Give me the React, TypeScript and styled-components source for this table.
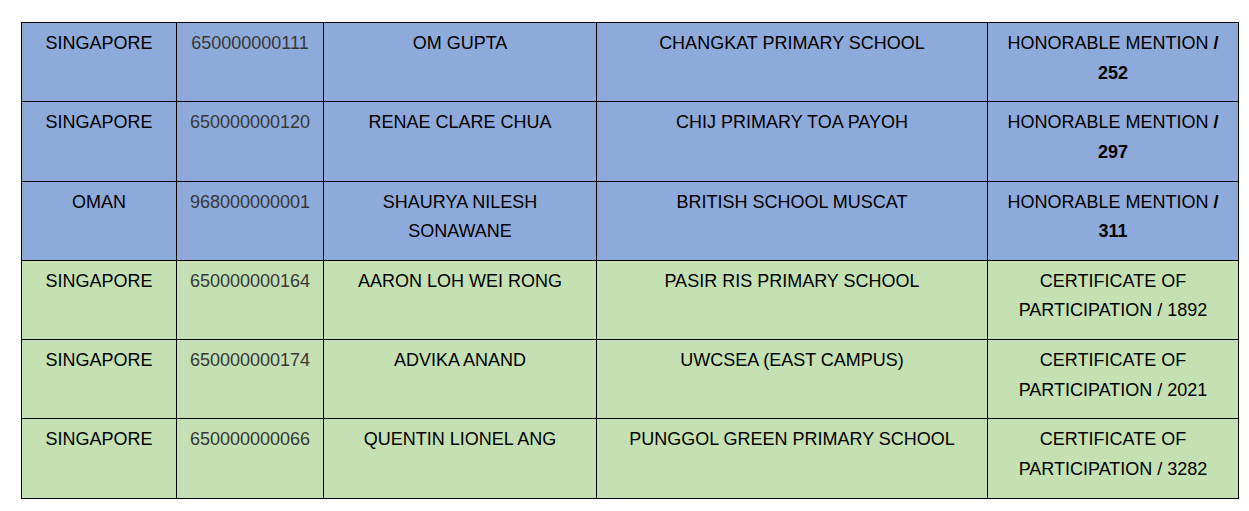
import React from "react"
import styled, { createGlobalStyle } from "styled-components"

const Global = createGlobalStyle`
  body {
    margin: 0;
    background: #ffffff;
    font-family: "Liberation Sans", Arial, sans-serif;
  }
`

const Page = styled.div`
  padding: 22px 0 0 21px;
`

const Table = styled.table`
  border-collapse: collapse;
  table-layout: fixed;
  width: 1217px;
`

const Col = styled.col<{ $w: number }>`
  width: ${(p) => p.$w}px;
`

const Row = styled.tr<{ $tone: "blue" | "green" }>`
  height: 79.3px;
  background: ${(p) => (p.$tone === "blue" ? "#8eaadb" : "#c5e0b3")};
`

const Cell = styled.td<{ $muted?: boolean }>`
  border: 1px solid #000;
  vertical-align: top;
  text-align: center;
  padding: 6px 8px 0;
  font-size: 18px;
  line-height: 29.6px;
  color: ${(p) => (p.$muted ? "#383838" : "#000")};
`

const Strong = styled.b`
  font-weight: 700;
`

type Entry = {
  country: string
  id: string
  name: string
  school: string
  award: string
  rank: string
  tone: "blue" | "green"
}

const widths = [155, 147, 273, 391, 251]

const rows: Entry[] = [
  { country: "SINGAPORE", id: "650000000111", name: "OM GUPTA", school: "CHANGKAT PRIMARY SCHOOL", award: "HONORABLE MENTION", rank: "252", tone: "blue" },
  { country: "SINGAPORE", id: "650000000120", name: "RENAE CLARE CHUA", school: "CHIJ PRIMARY TOA PAYOH", award: "HONORABLE MENTION", rank: "297", tone: "blue" },
  { country: "OMAN", id: "968000000001", name: "SHAURYA NILESH SONAWANE", school: "BRITISH SCHOOL MUSCAT", award: "HONORABLE MENTION", rank: "311", tone: "blue" },
  { country: "SINGAPORE", id: "650000000164", name: "AARON LOH WEI RONG", school: "PASIR RIS PRIMARY SCHOOL", award: "CERTIFICATE OF PARTICIPATION", rank: "1892", tone: "green" },
  { country: "SINGAPORE", id: "650000000174", name: "ADVIKA ANAND", school: "UWCSEA (EAST CAMPUS)", award: "CERTIFICATE OF PARTICIPATION", rank: "2021", tone: "green" },
  { country: "SINGAPORE", id: "650000000066", name: "QUENTIN LIONEL ANG", school: "PUNGGOL GREEN PRIMARY SCHOOL", award: "CERTIFICATE OF PARTICIPATION", rank: "3282", tone: "green" },
]

export default function App() {
  return (
    <Page>
      <Global />
      <Table>
        <colgroup>
          {widths.map((w, i) => (
            <Col key={i} $w={w} />
          ))}
        </colgroup>
        <tbody>
          {rows.map((r) => (
            <Row key={r.id} $tone={r.tone}>
              <Cell>{r.country}</Cell>
              <Cell $muted>{r.id}</Cell>
              <Cell>{r.name}</Cell>
              <Cell>{r.school}</Cell>
              <Cell>
                {r.tone === "blue" ? (
                  <>
                    {r.award} <Strong>/ {r.rank}</Strong>
                  </>
                ) : (
                  <>
                    {r.award} / {r.rank}
                  </>
                )}
              </Cell>
            </Row>
          ))}
        </tbody>
      </Table>
    </Page>
  )
}
